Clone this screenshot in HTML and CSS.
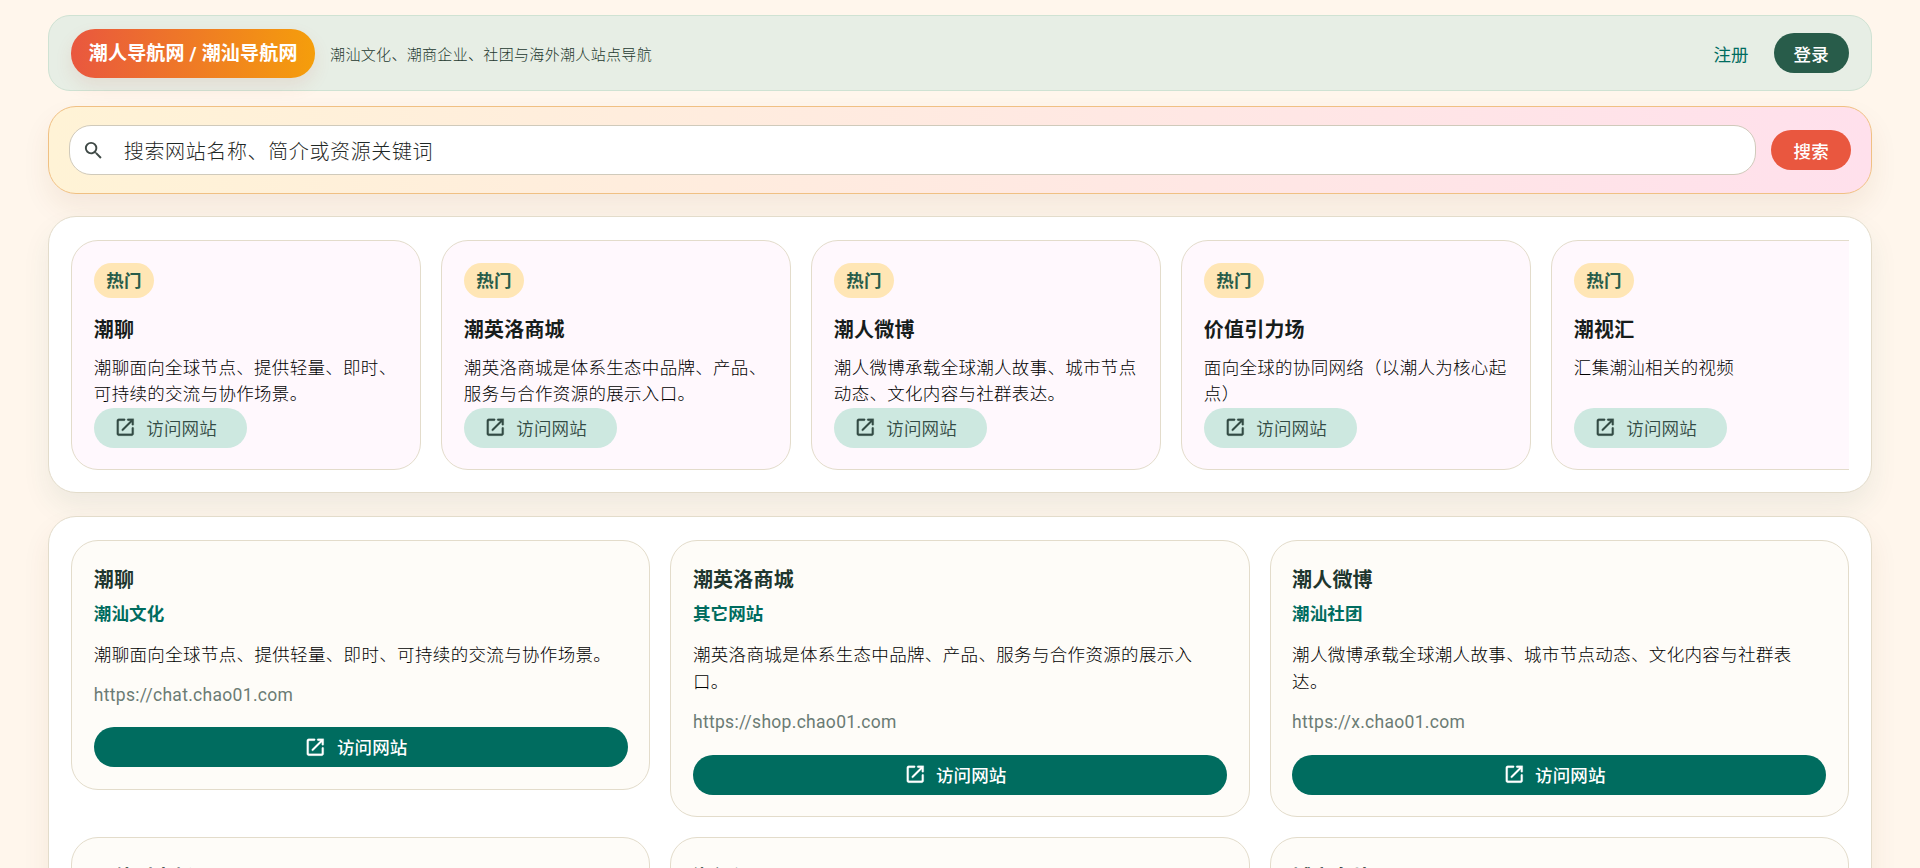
FILE: index.html
```html
<!DOCTYPE html>
<html lang="zh-CN">
<head>
    <meta charset="UTF-8">
    <meta name="viewport" content="width=device-width, initial-scale=1.0">
    <title>潮人导航网 / 潮汕导航网</title>
    <link rel="stylesheet" href="styles.css">
</head>
<body>
    <svg class="icon-defs" width="0" height="0">
        <symbol id="icon-open" viewBox="0 0 24 24">
            <path d="M18 19H6c-.55 0-1-.45-1-1V6c0-.55.45-1 1-1h5c.55 0 1-.45 1-1s-.45-1-1-1H5c-1.11 0-2 .9-2 2v14c0 1.1.9 2 2 2h14c1.1 0 2-.9 2-2v-6c0-.55-.45-1-1-1s-1 .45-1 1v5c0 .55-.45 1-1 1zM14 4c0 .55.45 1 1 1h2.59l-9.13 9.13c-.39.39-.39 1.02 0 1.41.39.39 1.02.39 1.41 0L19 6.41V9c0 .55.45 1 1 1s1-.45 1-1V3h-6c-.55 0-1 .45-1 1z"/>
        </symbol>
        <symbol id="icon-search" viewBox="0 0 24 24">
            <path d="M15.5 14h-.79l-.28-.27A6.471 6.471 0 0 0 16 9.5 6.5 6.5 0 1 0 9.5 16c1.61 0 3.09-.59 4.23-1.57l.27.28v.79l5 4.99L20.49 19l-4.99-5zm-6 0C7.01 14 5 11.99 5 9.5S7.01 5 9.5 5 14 7.01 14 9.5 11.99 14 9.5 14z"/>
        </symbol>
    </svg>

    <div class="container">
        <header class="header">
            <div class="logo">潮人导航网 / 潮汕导航网</div>
            <p class="tagline">潮汕文化、潮商企业、社团与海外潮人站点导航</p>
            <a class="register-link" href="#">注册</a>
            <button class="btn login-btn">登录</button>
        </header>

        <form class="search-bar">
            <label class="search-field">
                <svg class="search-icon"><use href="#icon-search"/></svg>
                <input class="search-input" type="text" placeholder="搜索网站名称、简介或资源关键词">
            </label>
            <button class="btn search-btn" type="button">搜索</button>
        </form>

        <section class="panel hot-panel">
            <div class="hot-list">
                <article class="hot-card">
                    <span class="hot-tag">热门</span>
                    <h3 class="hot-title">潮聊</h3>
                    <p class="hot-desc">潮聊面向全球节点、提供轻量、即时、可持续的交流与协作场景。</p>
                    <a class="btn tonal-btn" href="#"><svg class="icon"><use href="#icon-open"/></svg>访问网站</a>
                </article>
                <article class="hot-card">
                    <span class="hot-tag">热门</span>
                    <h3 class="hot-title">潮英洛商城</h3>
                    <p class="hot-desc">潮英洛商城是体系生态中品牌、产品、服务与合作资源的展示入口。</p>
                    <a class="btn tonal-btn" href="#"><svg class="icon"><use href="#icon-open"/></svg>访问网站</a>
                </article>
                <article class="hot-card">
                    <span class="hot-tag">热门</span>
                    <h3 class="hot-title">潮人微博</h3>
                    <p class="hot-desc">潮人微博承载全球潮人故事、城市节点动态、文化内容与社群表达。</p>
                    <a class="btn tonal-btn" href="#"><svg class="icon"><use href="#icon-open"/></svg>访问网站</a>
                </article>
                <article class="hot-card">
                    <span class="hot-tag">热门</span>
                    <h3 class="hot-title">价值引力场</h3>
                    <p class="hot-desc">面向全球的协同网络（以潮人为核心起点）</p>
                    <a class="btn tonal-btn" href="#"><svg class="icon"><use href="#icon-open"/></svg>访问网站</a>
                </article>
                <article class="hot-card">
                    <span class="hot-tag">热门</span>
                    <h3 class="hot-title">潮视汇</h3>
                    <p class="hot-desc">汇集潮汕相关的视频</p>
                    <a class="btn tonal-btn" href="#"><svg class="icon"><use href="#icon-open"/></svg>访问网站</a>
                </article>
            </div>
        </section>

        <section class="panel">
            <div class="site-grid">
                <article class="site-card">
                    <h3 class="site-title">潮聊</h3>
                    <div class="site-category">潮汕文化</div>
                    <p class="site-desc">潮聊面向全球节点、提供轻量、即时、可持续的交流与协作场景。</p>
                    <div class="site-url">https://chat.chao01.com</div>
                    <a class="btn visit-btn" href="#"><svg class="icon"><use href="#icon-open"/></svg>访问网站</a>
                </article>
                <article class="site-card">
                    <h3 class="site-title">潮英洛商城</h3>
                    <div class="site-category">其它网站</div>
                    <p class="site-desc">潮英洛商城是体系生态中品牌、产品、服务与合作资源的展示入口。</p>
                    <div class="site-url">https://shop.chao01.com</div>
                    <a class="btn visit-btn" href="#"><svg class="icon"><use href="#icon-open"/></svg>访问网站</a>
                </article>
                <article class="site-card">
                    <h3 class="site-title">潮人微博</h3>
                    <div class="site-category">潮汕社团</div>
                    <p class="site-desc">潮人微博承载全球潮人故事、城市节点动态、文化内容与社群表达。</p>
                    <div class="site-url">https://x.chao01.com</div>
                    <a class="btn visit-btn" href="#"><svg class="icon"><use href="#icon-open"/></svg>访问网站</a>
                </article>
                <article class="site-card">
                    <h3 class="site-title">价值引力场</h3>
                </article>
                <article class="site-card">
                    <h3 class="site-title">潮视汇</h3>
                </article>
                <article class="site-card">
                    <h3 class="site-title">城市名片</h3>
                </article>
            </div>
        </section>
    </div>
</body>
</html>
```
FILE: styles.css
```css
:root {
    --background: #fff6ec;
    --primary: #006c5f;
    --accent: #e9573f;
    --text: #171d1b;
    --border: #e3dccb;
}

* {
    box-sizing: border-box;
}

body {
    font-family: Roboto, "Noto Sans CJK SC", sans-serif;
    font-size: 17.5px;
    color: var(--text);
    background: var(--background);
    margin: 0;
    height: 100vh;
    overflow: hidden;
}

h3,
p {
    margin: 0;
}

.icon-defs {
    position: absolute;
}

.container {
    height: 100vh;
    padding: 15px 47.6px 0;
    overflow: hidden;
}

.header {
    display: flex;
    align-items: center;
    height: 76.25px;
    padding: 0 22.75px;
    background: #e7eee5;
    border: 1px solid #cfe2d3;
    border-radius: 22px;
}

.logo {
    height: 49px;
    padding: 0 17.5px;
    line-height: 49px;
    font-size: 19px;
    font-weight: 700;
    letter-spacing: 0.17px;
    color: #fff;
    white-space: nowrap;
    background: linear-gradient(90deg, #e9573f, #f59e0b);
    border-radius: 24px;
    box-shadow: 0 8px 18px rgba(200, 70, 50, 0.1);
}

.tagline {
    flex: 1;
    margin-left: 15px;
    font-size: 15px;
    font-weight: 300;
    letter-spacing: 0.33px;
    color: #24392f;
}

.btn {
    display: inline-flex;
    align-items: center;
    justify-content: center;
    height: 40px;
    padding: 0 20px;
    font: inherit;
    font-weight: 500;
    letter-spacing: 0.12px;
    white-space: nowrap;
    text-decoration: none;
    color: #fff;
    border: none;
    border-radius: 20px;
    cursor: pointer;
}

.register-link {
    margin-right: 25px;
    letter-spacing: 0.12px;
    text-decoration: none;
    color: var(--primary);
}

.login-btn {
    width: 75px;
    background: #285c4a;
}

.search-bar {
    display: flex;
    align-items: center;
    gap: 15px;
    height: 87.5px;
    margin-top: 15px;
    padding: 0 20.25px;
    background: linear-gradient(90deg, #fff3d6, #ffe0ec);
    border: 1px solid #f0c083;
    border-radius: 28px;
    box-shadow: 0 14px 28px rgba(120, 60, 30, 0.08);
}

.search-field {
    display: flex;
    align-items: center;
    flex: 1;
    height: 50px;
    padding-left: 12px;
    background: #fff;
    border: 1px solid #d0cabb;
    border-radius: 22px;
}

.search-icon {
    width: 23px;
    height: 23px;
    fill: #3f4946;
}

.search-input {
    flex: 1;
    padding: 3px 0 0;
    margin-left: 19px;
    font: inherit;
    font-size: 20px;
    font-weight: 300;
    letter-spacing: 0.62px;
    background: none;
    border: none;
    outline: none;
}

.search-input::placeholder {
    color: #1f2826;
}

.search-btn {
    width: 80px;
    background: var(--accent);
}

.panel {
    margin-top: 22.5px;
    padding: 22.75px;
    background: #fff;
    border: 1px solid var(--border);
    border-radius: 28px;
    box-shadow: 0 14px 28px rgba(120, 60, 30, 0.08);
}

.hot-panel {
    box-shadow: 0 14px 28px rgba(40, 92, 74, 0.08);
}

.hot-list {
    display: flex;
    gap: 20px;
    overflow: hidden;
}

.hot-card {
    display: flex;
    flex-direction: column;
    align-items: flex-start;
    flex: 0 0 350px;
    height: 229.6px;
    padding: 21.5px 21.5px 21px;
    background: #fff8fd;
    border: 1px solid var(--border);
    border-radius: 27px;
}

.hot-tag {
    height: 35px;
    padding: 1px 12.5px 0;
    line-height: 35px;
    font-weight: 700;
    letter-spacing: 0.12px;
    color: #285c4a;
    background: #ffe6b5;
    border-radius: 18px;
}

.hot-title {
    margin-top: 17px;
    line-height: 30px;
    font-size: 20px;
    font-weight: 700;
    letter-spacing: 0.18px;
}

.hot-desc {
    flex: 1;
    margin-top: 10.5px;
    line-height: 26px;
    font-weight: 300;
    letter-spacing: 0.3px;
    color: #000;
}

.icon {
    width: 22.5px;
    height: 22.5px;
    margin-right: 10px;
    fill: currentColor;
    stroke: currentColor;
    stroke-width: 0.3;
}

.tonal-btn {
    padding: 0 30px 1px 20px;
    font-weight: 350;
    color: #334b44;
    background: #cde8e0;
}

.site-grid {
    display: grid;
    grid-template-columns: repeat(3, 1fr);
    align-items: start;
    gap: 20px;
}

.site-card {
    padding: 24.4px 21.5px 21.3px;
    background: #fefcf8;
    border: 1px solid var(--border);
    border-radius: 27px;
}

.site-title {
    line-height: 30px;
    font-size: 20px;
    font-weight: 700;
    letter-spacing: 0.18px;
    color: #20362e;
}

.site-category {
    margin-top: 7px;
    line-height: 25px;
    font-weight: 700;
    letter-spacing: 0.12px;
    color: var(--primary);
}

.site-desc {
    margin-top: 14.9px;
    line-height: 27.5px;
    font-weight: 300;
    letter-spacing: 0.34px;
    color: #000;
}

.site-url {
    margin-top: 13.5px;
    line-height: 24px;
    letter-spacing: 0.3px;
    color: #6b7b74;
}

.visit-btn {
    width: 100%;
    margin-top: 20.6px;
    padding: 0 30px 1px 20px;
    background: var(--primary);
}
```
